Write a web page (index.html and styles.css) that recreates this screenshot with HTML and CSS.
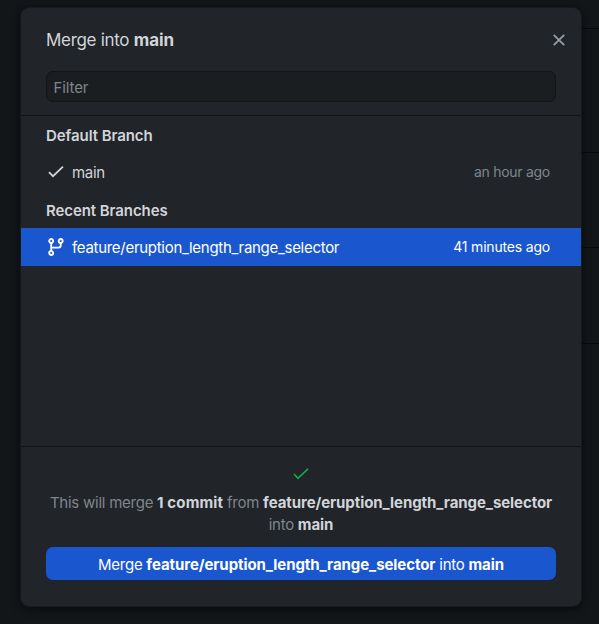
FILE: index.html
```html
<!DOCTYPE html>
<html lang="en">
<head>
<meta charset="utf-8">
<title>Merge into main</title>
<link rel="stylesheet" href="styles.css">
</head>
<body>
<main class="dialog">
  <header class="dialog-header">
    <h1 class="title">Merge into <strong>main</strong></h1>
    <button class="close" aria-label="Close"><svg width="12" height="12" viewBox="0 0 12 12"><path d="M.8.8l10.4 10.4M11.2.8L.8 11.2"/></svg></button>
  </header>
  <div class="filter"><input class="filter-input" type="text" placeholder="Filter"></div>
  <section class="branches">
    <h2 class="group">Default Branch</h2>
    <div class="row">
      <svg class="icon" width="18" height="18" viewBox="0 0 18 18"><path d="M2 9.2l4 4L16 3.7"/></svg>
      <span class="name">main</span>
      <span class="time">an hour ago</span>
    </div>
    <h2 class="group">Recent Branches</h2>
    <div class="row selected">
      <svg class="icon" width="18" height="18" viewBox="0 0 18 18"><circle cx="4.2" cy="3" r="2"/><circle cx="13.7" cy="3" r="2"/><circle cx="4.2" cy="15" r="2"/><path d="M4.2 5v8M4.2 9.6h7.5a2 2 0 0 0 2-2V5"/></svg>
      <span class="name">feature/eruption_length_range_selector</span>
      <span class="time">41 minutes ago</span>
    </div>
  </section>
  <footer class="dialog-footer">
    <svg class="status" width="16" height="12" viewBox="0 0 16 12"><path d="M1 6l4 4.3L15 .9"/></svg>
    <p class="summary">This will merge <strong class="count">1 commit</strong> from <strong>feature/eruption_length_range_selector</strong><br>into <strong>main</strong></p>
    <button class="merge">Merge <strong>feature/eruption_length_range_selector</strong> into <strong>main</strong></button>
  </footer>
</main>
<aside class="backdrop"><div></div><div></div><div></div><div></div></aside>
</body>
</html>
```
FILE: styles.css
```css
* { box-sizing: border-box; }
body {
  margin: 0;
  height: 624px;
  overflow: hidden;
  display: flex;
  padding: 8px 0 0 21px;
  background: #121619;
  color: #d1d5da;
  font: 15px/22px Inter, "Liberation Sans", sans-serif;
}
h1, h2, p { margin: 0; }
button, input { font: inherit; border: 0; padding: 0; }
strong { font-weight: 700; letter-spacing: -.08px; }
svg { fill: none; stroke: currentColor; flex: none; }
.dialog {
  position: relative;
  z-index: 1;
  width: 560px;
  height: 598px;
  display: flex;
  flex-direction: column;
  flex: none;
  overflow: hidden;
  border-radius: 8px;
  background: #212428;
  box-shadow: 0 0 0 1px #17191b, 0 2px 8px rgba(0, 0, 0, .65);
}
.dialog-header {
  height: 63px;
  padding: 0 16px 0 25px;
  display: flex;
  align-items: center;
  justify-content: space-between;
}
.title { font-size: 17px; font-weight: 400; letter-spacing: -.3px; }
.close { width: 12px; height: 12px; background: none; color: #959da5; display: flex; }
.close svg { stroke-width: 1.8; }
.filter { height: 45px; padding: 0 25px; border-bottom: 1px solid #141414; }
.filter-input {
  width: 100%;
  height: 31px;
  padding: 2px 6.5px 0;
  border: 1px solid #141414;
  border-radius: 7px;
  background: #1b1e20;
}
.filter-input::placeholder { color: #7f868d; opacity: 1; letter-spacing: -.1px; }
.branches { height: 331px; border-bottom: 1px solid #141414; }
.group { height: 37px; padding-left: 25px; font-size: 15px; font-weight: 600; line-height: 40px; letter-spacing: -.08px; }
.row { height: 38px; padding: 0 31px 0 26px; display: flex; align-items: center; }
.icon { stroke-width: 1.8; margin-right: 7px; }
.name { flex: 1; padding-top: 2px; letter-spacing: -.29px; }
.time { font-size: 14px; color: #7f868d; letter-spacing: -.27px; }
.selected { background: #1a57cf; color: #fff; }
.selected .time { color: #fff; letter-spacing: -.19px; }
.dialog-footer { padding: 21px 25px 0; display: flex; flex-direction: column; align-items: center; }
.status { color: #10a64a; stroke-width: 1.8; margin-bottom: 12px; }
.summary { text-align: center; white-space: nowrap; color: #7f868d; letter-spacing: -.25px; }
.summary strong { color: #d1d5da; }
.summary .count { letter-spacing: .12px; }
.merge { width: 510px; height: 33px; margin-top: 11px; padding-top: 2px; border-radius: 7px; background: #1a57cf; color: #fff; white-space: nowrap; letter-spacing: -.25px; }
.backdrop { flex: 1; padding-top: 20px; }
.backdrop div { height: 96px; border-top: 1px solid #08090a; }
.backdrop div:first-child { height: 124px; }
.backdrop div:nth-child(2) { height: 95px; }
```
